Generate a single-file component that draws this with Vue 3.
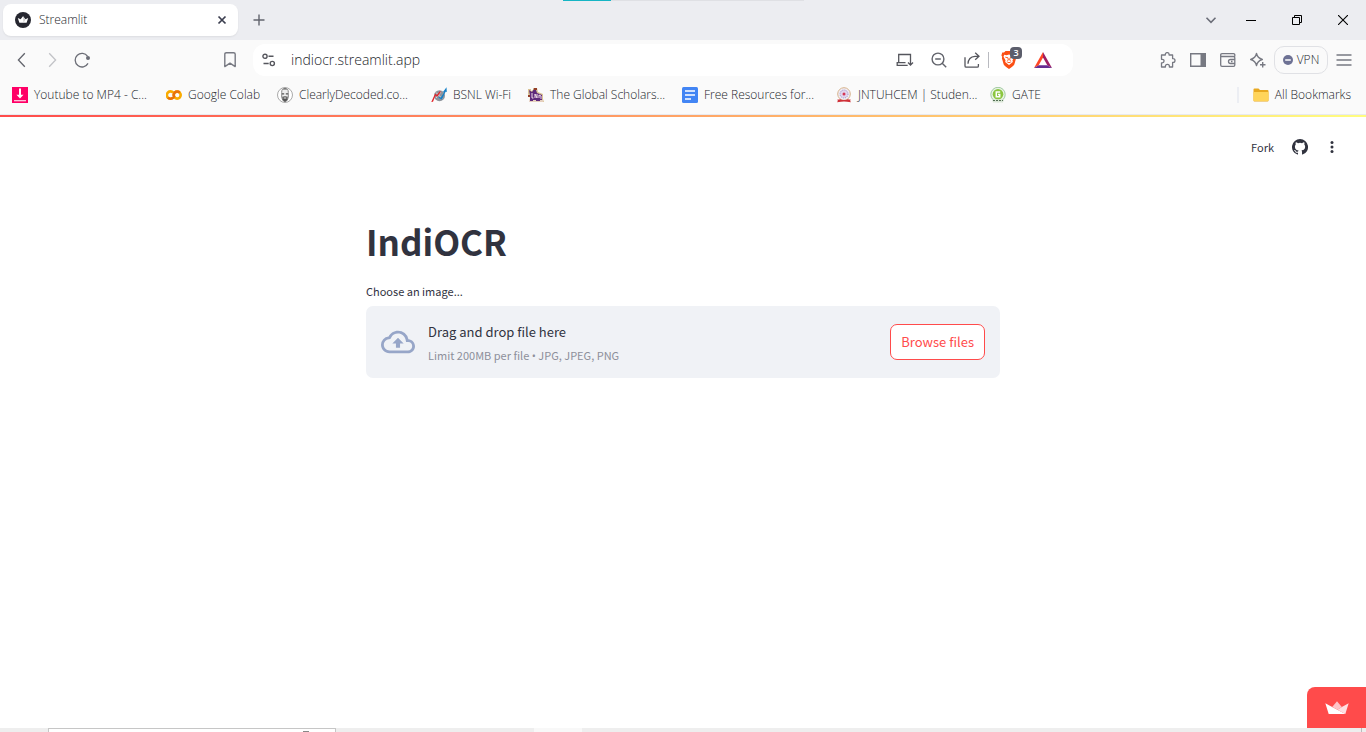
<script setup>
import { ref } from 'vue'

const address = ref('indiocr.streamlit.app')
const fileInput = ref(null)
const bookmarks = [
  { icon: 'download', name: 'Youtube to MP4 - C...', size: 'long' },
  { icon: 'colab', name: 'Google Colab', size: 'medium' },
  { icon: 'face', name: 'ClearlyDecoded.co...', size: 'long' },
  { icon: 'bsnl', name: 'BSNL Wi-Fi', size: 'short' },
  { icon: 'castle', name: 'The Global Scholars...', size: 'long' },
  { icon: 'doc', name: 'Free Resources for...', size: 'long' },
  { icon: 'seal', name: 'JNTUHCEM | Studen...', size: 'long' },
  { icon: 'gate', name: 'GATE', size: 'short' }
]
</script>

<template>
  <div class="window">
    <header class="tabs">
      <div class="tab">
        <svg width="16" height="16" viewBox="0 0 16 16"><circle cx="8" cy="8" r="8" fill="#262730" /><path d="M2.8 6l2.8 1.3L8 4.2l2.4 3.1L13.2 6l-1.6 4.8H4.4z" fill="#fff" /><path d="M8 4.2l2.4 3.1L8.6 10.8z" fill="#ccc" /></svg>
        <span class="tab-title">Streamlit</span>
        <button class="icon close" aria-label="Close tab"><svg width="10" height="10" viewBox="0 0 10 10"><path d="M1.5 1.5l7 7m0-7l-7 7" stroke="#3b3e4f" stroke-width="1.7" /></svg></button>
      </div>
      <button class="icon new-tab" aria-label="New tab"><svg width="12" height="12" viewBox="0 0 12 12"><path d="M6 .5v11M.5 6h11" stroke="#62646e" stroke-width="1.4" /></svg></button>
      <div class="window-controls">
        <button class="icon" aria-label="Search tabs"><svg width="12" height="12" viewBox="0 0 12 12"><path d="M1.5 3.8L6 8.3l4.5-4.5" fill="none" stroke="#6b6d78" stroke-width="1.6" /></svg></button>
        <button class="icon" aria-label="Minimize"><svg width="10" height="10" viewBox="0 0 10 10"><path d="M0 5.5h10" stroke="#000" /></svg></button>
        <button class="icon" aria-label="Restore"><svg width="10" height="10" viewBox="0 0 10 10"><path d="M.5 2.5h7v7h-7zM2.5 2.5v-2h7v7h-2" fill="none" stroke="#000" /></svg></button>
        <button class="icon" aria-label="Close window"><svg width="10" height="10" viewBox="0 0 10 10"><path d="M0 0l10 10M10 0L0 10" stroke="#000" stroke-width="1.1" /></svg></button>
      </div>
      <div class="progress"></div>
    </header>

    <nav class="toolbar">
      <div class="history">
        <button class="icon" aria-label="Back"><svg width="16" height="16" viewBox="0 0 16 16"><path d="M10.8 1.2L4.4 8l6.4 6.8" fill="none" stroke="#62646c" stroke-width="1.3" /></svg></button>
        <button class="icon" aria-label="Forward"><svg width="16" height="16" viewBox="0 0 16 16"><path d="M5.2 1.2L11.6 8l-6.4 6.8" fill="none" stroke="#c2c3c7" stroke-width="1.3" /></svg></button>
        <button class="icon" aria-label="Reload"><svg width="16" height="16" viewBox="0 0 16 16"><path d="M13.6 4.3A6.8 6.8 0 1 0 14 11.4" fill="none" stroke="#6b6d76" stroke-width="1.3" /><circle cx="14" cy="6" r="2" fill="#6b6d76" /></svg></button>
      </div>
      <button class="icon save" aria-label="Bookmark this page"><svg width="12" height="16" viewBox="0 0 12 16"><path d="M.8 14.6V2.3Q.8.7 2.4.7h7.2q1.6 0 1.6 1.6v12.3L6 11.2z" fill="none" stroke="#777982" stroke-width="1.4" stroke-linejoin="round" /></svg></button>
      <div class="address">
        <svg width="14" height="14" viewBox="0 0 14 14" fill="none" stroke="#55565d" stroke-width="1.4"><circle cx="3" cy="3.3" r="2.1" /><path d="M6.5 3.3h5M1.5 10.5h5.2" /><circle cx="10.3" cy="10.5" r="2.1" /></svg>
        <input v-model="address" type="text" aria-label="Address" />
        <div class="address-tools">
          <button class="icon" aria-label="Install app"><svg width="18" height="14" viewBox="0 0 18 14" fill="none" stroke="#55565d" stroke-width="1.3"><path d="M14.500 5.500V1.500H2.700v8M9.500 9.700H1.200v2.600h10.500M14.500 5.500v6.300M12 9.500l2.500 2.500L17 9.500" /></svg></button>
          <button class="icon" aria-label="Zoom out"><svg width="16" height="16" viewBox="0 0 16 16" fill="none" stroke="#62646c" stroke-width="1.4"><circle cx="7" cy="7" r="5.9" /><path d="M4.2 7h5.6M11.2 11.2l4 4" /></svg></button>
          <button class="icon" aria-label="Share"><svg width="16" height="16" viewBox="0 0 16 16" fill="none" stroke="#55565d" stroke-width="1.3"><path d="M1 5.2v8.7q0 1.2 1.2 1.2h11q1.2 0 1.2-1.2v-1.8M4 11.8q.3-7 7-7.5H15M11.2.8L15 4.3l-3.8 3.5" /></svg></button>
          <i class="divider"></i>
          <button class="icon shield" aria-label="Brave Shields">
            <svg width="16" height="18" viewBox="0 0 16 18"><path d="M4.500 0h7L13 1.600h1.800l.8 2.900-.8 1.300.3 1.500-1.800 6.300Q12.800 15 8 18 3.200 15 2.700 13.600L.900 7.300l.3-1.500-.8-1.300.8-2.900H3z" fill="#fb4f14" /><path d="M3.200 3.800l2.300.5L8 3.600l2.500.7 2.300-.5.7 2-2 3.500.3 1.700L8 14l-3.800-3 .3-1.700-2-3.500z" fill="#fff" /><path d="M4.300 6.200l2.700.6.300 2.400-1.500 1.300M11.700 6.200L9 6.800l-.3 2.400 1.500 1.300M6.500 11.500h3" fill="none" stroke="#fb4f14" stroke-width=".9" /></svg>
            <span class="count">3</span>
          </button>
          <button class="icon" aria-label="Rewards"><svg width="18" height="16" viewBox="0 0 18 16"><path d="M9 0L0 16l4.700-2.800L9 5.500z" fill="#ff4724" /><path d="M9 0l9 16-4.700-2.800L9 5.500z" fill="#9e1f63" /><path d="M0 16l4.700-2.800h8.600L18 16z" fill="#662d91" /></svg></button>
        </div>
      </div>
      <div class="tools">
        <button class="icon" aria-label="Extensions"><svg width="16" height="16" viewBox="0 0 16 16"><path d="M1.500 3h3.800V2.500a1.900 1.900 0 0 1 3.800 0V3h3.500v3.600h.5a1.900 1.900 0 0 1 0 3.800h-.5V15H9.400v-.700a2 2 0 0 0-4 0V15H1.500v-4.200h.8a1.700 1.700 0 0 0 0-3.500h-.8z" fill="none" stroke="#777982" stroke-width="1.300" stroke-linejoin="round" /></svg></button>
        <button class="icon" aria-label="Sidebar"><svg width="16" height="14" viewBox="0 0 16 14"><path d="M.700.700h14.600v12.600H.700z" fill="none" stroke="#777982" stroke-width="1.400" /><path d="M10.500 1H15v12h-4.500z" fill="#777982" /></svg></button>
        <button class="icon" aria-label="Wallet"><svg width="16" height="14" viewBox="0 0 16 14" fill="none" stroke="#777982" stroke-width="1.300"><path d="M14.800 3.500V2q0-1.300-1.300-1.300H2Q.700.700.700 2v10q0 1.300 1.300 1.300h11.500q1.300 0 1.300-1.300v-1.500M.700 3.500h12.800q1.300 0 1.300 1.300v5.700H10.500Q8.500 10.500 8.500 8.500t2-2h4.300M11 8.500h1.500" /></svg></button>
        <button class="icon" aria-label="Leo AI"><svg width="16" height="16" viewBox="0 0 16 16"><path d="M6.500 1.500q1 4.500 5.800 6-4.800 1.500-5.800 6-1-4.500-5.800-6 4.800-1.500 5.800-6zM12.700 10v5.500M10 12.700h5.500" fill="none" stroke="#777982" stroke-width="1.400" stroke-linejoin="round" /></svg></button>
        <button class="vpn"><svg width="10" height="10" viewBox="0 0 10 10"><circle cx="5" cy="5" r="5" fill="#6d7194" /><path d="M2.200 5h5.600" stroke="#fff" stroke-width="1.500" /></svg>VPN</button>
        <button class="icon" aria-label="Menu"><svg width="16" height="12" viewBox="0 0 16 12"><path d="M.500 1h15M.500 6h15M.500 11h15" stroke="#777982" stroke-width="1.300" /></svg></button>
      </div>
    </nav>

    <nav class="bookmarks" aria-label="Bookmarks">
      <a v-for="b in bookmarks" :key="b.name" href="#" :class="b.size">
        <svg v-if="b.icon === 'download'" width="16" height="16" viewBox="0 0 16 16"><path d="M0 0h16v16H0z" fill="#f06" /><path d="M7 1.500h2v6.200h2.500L8 11.500 4.500 7.700H7zM2 13.300h12v1H2z" fill="#fff" /></svg>
        <svg v-else-if="b.icon === 'colab'" width="16" height="16" viewBox="0 0 16 16" fill="none" stroke-width="2.600"><path d="M7.200 5.500a3.700 3.700 0 1 0 0 5.200" stroke="#f9ab00" /><circle cx="11.200" cy="8.100" r="3.500" stroke="#f9ab00" /><path d="M8.700 10.600A3.500 3.500 0 0 1 13.700 5.600M2 10.700a3.700 3.700 0 0 0 5.200 0" stroke="#e8710a" /></svg>
        <svg v-else-if="b.icon === 'face'" width="16" height="16" viewBox="0 0 16 16"><circle cx="8" cy="8" r="7.500" fill="#fff" stroke="#aaa" /><path d="M4.700 5.500Q4.500 1.300 8 1.300t3.300 4.200v4.800Q10.500 14.500 8 14.700q-2.500-.2-3.300-4.400z" fill="#eee" stroke="#888" /><path d="M5 6.300h2.200v1.200H5zM8.800 6.300H11v1.200H8.800zM5.200 9.800L8 9.200l2.800.600-.700 3.400L8 14.700l-2.100-1.500zM5.500 2.600Q8 .5 10.500 2.600z" fill="#555" /><path d="M6.700 11h2.600" stroke="#eee" /></svg>
        <svg v-else-if="b.icon === 'bsnl'" width="16" height="16" viewBox="0 0 16 16"><circle cx="8.500" cy="8.700" r="5.500" fill="#8e949c" /><path d="M5 5.500l6 6M5 11l5-6" stroke="#d7dade" /><path d="M.300 15l2-4.500 2-4 1.500 1.500 3.200-4 .8 1-3.500 4.800-1.800-1.300L2 14.800z" fill="#e3242b" /><path d="M7.500 9.500l2.300 1L13 5.400 12 5l3.500-4.700L15.800 5l-1.200-.3-3.800 7.800-3-1.500z" fill="#1680c8" /></svg>
        <svg v-else-if="b.icon === 'castle'" width="16" height="16" viewBox="0 0 16 16"><path d="M0 2h3v2l2-1V1h4l1 4 5 2v5l1 3H1l1-4L0 7z" fill="#d9c293" /><path d="M1 3l3 2 2-3 2 1 1 3 5 2v5H2V8z" fill="#5e287b" /><path d="M6 1h3v2H6zM0 8h2v2H0z" fill="#923d27" /><path d="M4 6v5h1.500M7 11V7l2 4V7M11 11V8l2 1v3M1 14h14" fill="none" stroke="#f1dce9" /><path d="M2 13h3v1H2zM8 13h4v1H8z" fill="#5e287b" /></svg>
        <svg v-else-if="b.icon === 'doc'" width="16" height="16" viewBox="0 0 16 16"><rect width="16" height="16" rx="1.500" fill="#4285f4" /><path d="M3 4h10M3 8h10M3 12h6" stroke="#fff" stroke-width="1.700" /></svg>
        <svg v-else-if="b.icon === 'seal'" width="16" height="16" viewBox="0 0 16 16"><circle cx="8" cy="7" r="6.300" fill="#f2edf4" stroke="#d6b28b" /><circle cx="8" cy="7" r="4" fill="#e1d5ed" stroke="#9b91c9" stroke-dasharray="1 1" /><circle cx="8" cy="7" r="1.500" fill="#d43655" /><path d="M1 12.700l3.500-.5Q8 14 11.500 12.200l3.500.5-1 1 1 1.500-4-.4Q8 14.300 5 14.800l-4 .4 1-1.500z" fill="#cf3038" /></svg>
        <svg v-else width="16" height="16" viewBox="0 0 16 16"><circle cx="8" cy="7.500" r="7.200" fill="#e8f3e4" stroke="#a0c9a0" /><circle cx="8" cy="7.300" r="5.300" fill="#8bc63f" /><path d="M10.200 5H6.300v4.700h3.400V7.500H8" fill="none" stroke="#fff" stroke-width="1.500" /><path d="M2 12.500h12l-1 3H3z" fill="#d9e6d6" /><path d="M3 13.500h10" stroke="#547054" stroke-dasharray="2 1" /></svg>
        <span>{{ b.name }}</span>
      </a>
      <a href="#" class="all">
        <svg width="16" height="14" viewBox="0 0 16 14"><path d="M.500 1.500Q.500.500 1.500.500h4L7 2h7.500q1 0 1 1v9.500q0 1-1 1h-13q-1 0-1-1z" fill="#e8a820" /><path d="M.500 4h15v8.200q0 .8-1 .8h-13q-1 0-1-.8z" fill="#ffd45a" /></svg>
        <span>All Bookmarks</span>
      </a>
    </nav>

    <main class="page">
      <div class="page-actions">
        <button>Fork</button>
        <button class="icon" aria-label="View on GitHub"><svg width="16" height="16" viewBox="0 0 16 16"><path fill="#31333f" d="M8 0a8 8 0 0 0-2.530 15.590c.400.070.550-.170.550-.380v-1.490c-2.010.370-2.530-.490-2.690-.940-.090-.230-.480-.940-.820-1.130-.280-.150-.680-.520-.010-.530.630-.010 1.080.580 1.230.820.720 1.210 1.870.870 2.330.660.070-.520.280-.870.510-1.070-1.780-.200-3.640-.890-3.640-3.950 0-.870.310-1.590.820-2.150-.080-.200-.360-1.020.080-2.120 0 0 .670-.210 2.200.820a7.600 7.600 0 0 1 4 0c1.530-1.040 2.200-.820 2.200-.820.440 1.100.160 1.920.080 2.120.510.560.820 1.270.820 2.150 0 3.070-1.870 3.750-3.650 3.950.290.250.540.730.540 1.480v2.200c0 .210.150.460.550.380A8 8 0 0 0 8 0z" /></svg></button>
        <button class="icon more" aria-label="Main menu"><svg width="4" height="12" viewBox="0 0 4 12" fill="#31333f"><circle cx="2" cy="1.500" r="1.500" /><circle cx="2" cy="6" r="1.500" /><circle cx="2" cy="10.500" r="1.500" /></svg></button>
      </div>
      <section class="content">
        <h1>IndiOCR</h1>
        <label for="upload">Choose an image...</label>
        <div class="dropzone">
          <svg width="34" height="34" viewBox="0 0 24 24" fill="#97a6c8"><path d="M19.350 10.040A7.490 7.490 0 0 0 12 4C9.110 4 6.600 5.640 5.350 8.040A5.994 5.994 0 0 0 0 14c0 3.310 2.690 6 6 6h13c2.760 0 5-2.240 5-5 0-2.640-2.050-4.780-4.650-4.960zM19 18H6c-2.210 0-4-1.790-4-4 0-2.050 1.530-3.760 3.560-3.970l1.070-.110.500-.950A5.469 5.469 0 0 1 12 6c2.620 0 4.880 1.860 5.390 4.430l.3 1.500 1.530.110A2.980 2.980 0 0 1 22 15c0 1.650-1.350 3-3 3zM8 13h2.550v3h2.900v-3H16l-4-4z" /></svg>
          <div class="hint">
            <p>Drag and drop file here</p>
            <small>Limit 200MB per file <span class="dot">•</span> JPG, JPEG, PNG</small>
          </div>
          <input id="upload" ref="fileInput" type="file" accept=".jpg,.jpeg,.png" />
          <button class="browse" @click="fileInput.click()">Browse files</button>
        </div>
      </section>
      <a href="#" class="badge" aria-label="Hosted with Streamlit"><svg width="24" height="14" viewBox="0 0 24 14"><path d="M.300 2.300l6.900 3.600L20.500 13H3.700z" fill="#fff" /><path d="M7.200 5.900L12 .300l4.800 5.600-4.300 2.900z" fill="#ffc4c8" /><path d="M16.800 5.900l6.900-3.600L20.300 13l-7.800-4.200z" fill="#ffdfe2" /></svg></a>
    </main>

    <footer class="taskbar">
      <div class="search"><i></i></div>
      <div class="active-app"></div>
      <div class="desktop-edge"></div>
    </footer>
  </div>
</template>

<style>
body { margin: 0; background: #fff; }
</style>

<style scoped>
* { box-sizing: border-box; }
.window { min-height: 100vh; display: flex; flex-direction: column; font: 340 12px/16px "Open Sans", "Noto Sans", sans-serif; color: #23252b; }
button { font: inherit; color: inherit; border: 0; padding: 0; background: none; }
a { color: inherit; text-decoration: none; }
svg { display: block; flex: none; }
.icon { display: flex; align-items: center; justify-content: center; flex: none; }
.tabs { position: relative; height: 40px; display: flex; align-items: center; background: #ecedf1; padding-left: 3px; }
.progress { position: absolute; left: 563px; top: 0; width: 241px; height: 1px; background: #dfe0e4; border-left: 48px solid #16b5c4; }
.tab { width: 235px; height: 32px; display: flex; align-items: center; background: #fff; border-radius: 8px; padding: 0 11px 0 12px; box-shadow: 0 1px 2px #0001; }
.tab-title { margin-left: 8px; flex: 1; }
.new-tab { margin-left: 15px; }
.window-controls { margin-left: auto; display: flex; align-items: center; }
.window-controls .icon { width: 46px; height: 40px; }
.window-controls .icon:first-child { width: 34px; }
.toolbar { height: 40px; display: flex; align-items: center; background: #fafafa; padding: 0 14px; }
.history { display: flex; gap: 14px; }
.save { margin-left: 134px; }
.address { flex: 1; height: 32px; margin-left: 17px; display: flex; align-items: center; background: #fff; border-radius: 12px; padding: 0 21px 0 9px; }
.address input { flex: 1; min-width: 0; margin-left: 15px; padding: 0; border: 0; outline: 0; background: none; color: #23252b; font: 340 14px/20px "Open Sans", "Noto Sans", sans-serif; }
.address-tools { display: flex; align-items: center; gap: 17px; }
.divider { width: 1px; height: 16px; background: #b9bac0; margin: 0 -5px 0 -9px; }
.shield { position: relative; }
.count { position: absolute; left: 9px; top: -4px; width: 12px; height: 12px; border-radius: 4px; background: #5b5d6b; color: #fff; font-size: 9px; line-height: 12px; font-weight: 600; }
.tools { display: flex; align-items: center; gap: 14px; margin-left: 87px; }
.vpn { height: 28px; width: 54px; display: flex; align-items: center; justify-content: center; gap: 4px; border: 1px solid #e0e1e5; border-radius: 10px; margin: 0 -6px; }
.bookmarks { height: 35px; display: flex; align-items: center; background: #fafafa; border-bottom: 1px solid #e8eaf0; padding: 0 15px 4px 12px; white-space: nowrap; }
.bookmarks a { display: flex; align-items: center; gap: 6px; }
.long { width: 154px; }
.medium { width: 111px; }
.short { width: 97px; }
.bookmarks .all { margin-left: auto; padding-left: 14px; border-left: 2px solid #eceef3; }
.page { position: relative; flex: 1; border-top: 2px solid #ff4b4b; border-image: linear-gradient(90deg, #ff4b4b, #fffd80) 1; color: #31333f; font-family: "Noto Sans CJK SC", "Source Sans Pro", sans-serif; font-weight: 400; }
.page-actions { display: flex; align-items: center; justify-content: flex-end; gap: 18px; padding: 22px 28px 0 0; font-size: 11px; }
.more { width: 12px; }
.content { max-width: 634px; margin: 0 auto; padding-top: 64px; }
h1 { margin: 0; font-size: 35px; line-height: 44px; font-weight: 700; }
.content > label { display: block; margin: 20px 0 7px; font-size: 11px; line-height: 16px; }
.dropzone { position: relative; display: flex; align-items: center; min-height: 72px; padding: 13px 15px; background: #f0f2f6; border-radius: 7px; }
.hint { margin-left: 13px; padding-top: 2px; flex: 1; }
.hint p { margin: 0 0 3px; font-size: 13px; line-height: 22px; }
.hint small { display: block; font-size: 11px; line-height: 18px; color: #8d8f9a; }
.dot { font-family: "Open Sans", sans-serif; }
.dropzone input { position: absolute; width: 1px; height: 1px; opacity: 0; pointer-events: none; }
.browse { height: 36px; padding: 0 10px; border: 1px solid #ff4b4b; border-radius: 7px; background: #fff; color: #ff4b4b; font-size: 13px; }
.badge { position: absolute; right: 0; bottom: 0; width: 59px; height: 41px; display: flex; align-items: center; justify-content: center; background: #ff4b4b; border-top-left-radius: 8px; }
.taskbar { height: 4px; display: flex; background: #eee; padding: 0 4px 0 48px; }
.search { width: 288px; border: 1px solid #c6c6c6; border-bottom: 0; background: #fff; overflow: hidden; display: flex; justify-content: flex-end; align-items: flex-end; padding-right: 26px; }
.search i { width: 6px; height: 1px; background: #888; }
.active-app { width: 48px; margin-left: 198px; background: #f8f8f8; }
.desktop-edge { width: 1px; margin-left: auto; background: #bbb; }
</style>
